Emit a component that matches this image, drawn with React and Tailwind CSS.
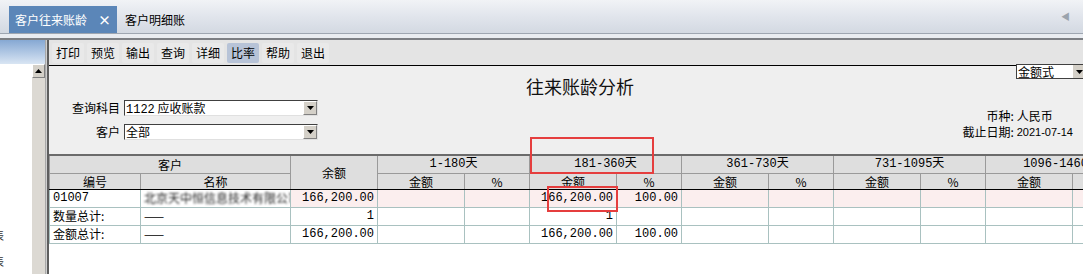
import React from "react";

const cjk = "font-['SimSun','Noto_Sans_CJK_SC',sans-serif]";
const num = "font-['Liberation_Mono','Noto_Sans_CJK_SC',monospace]";

const tools = ["打印", "预览", "输出", "查询", "详细", "比率", "帮助", "退出"];
const ranges = ["1-180天", "181-360天", "361-730天", "731-1095天", "1096-1460天"];

const Dropdown = ({ value, width }) => (
  <div
    className={`flex h-[16px] ${width} border border-t-[#404040] border-l-[#404040] border-r-[#e0e0e0] border-b-[#e0e0e0] bg-white`}
  >
    <span className="flex-1 pl-[1px] text-[12px] leading-[14px] text-black">{value}</span>
    <span className="flex w-[14px] items-center justify-center border border-t-white border-l-white border-r-[#808080] border-b-[#808080] bg-[#d4d0c8]">
      <svg width="7" height="4" viewBox="0 0 7 4">
        <path d="M0 0h7L3.5 4z" fill="#000" />
      </svg>
    </span>
  </div>
);

const hd = "border border-[#9a9a9a] bg-[#dedede] text-center font-normal text-[12px] leading-[15px] text-black p-0";
const td = "border border-[#a9c1c0] text-[12px] text-black p-0 px-[3px] h-[18px] leading-[16px]";

export default function App() {
  return (
    <div className={`relative flex h-[274px] w-[1083px] flex-col overflow-hidden bg-[#efefef] ${cjk}`}>
      {/* tab bar */}
      <div className="flex h-[33px] shrink-0 items-end bg-gradient-to-b from-[#f1f3f6] via-[#e1e5ec] to-[#d3d9e2] pl-[9px]">
        <div className="flex h-[27px] w-[108px] items-center bg-[#5b86b8] pl-[6px] text-[12px] text-white">
          <span>客户往来账龄</span>
          <span className="ml-[11px] text-[13px] font-bold">×</span>
        </div>
        <div className="flex h-[27px] items-center pl-[8px] text-[12px] text-black">客户明细账</div>
        <div className="ml-auto mr-[13px] self-center text-[9px] text-[#9aa3ad]">◀</div>
      </div>
      <div className="h-[7px] shrink-0 border-t border-t-[#9ea6b1] border-b-2 border-b-[#7c7f84] bg-[#e9ecf1]" />

      {/* body */}
      <div className="flex min-h-0 flex-1">
        {/* left panel */}
        <div className="flex w-[45px] shrink-0 flex-col bg-white">
          <div className="h-[31px] bg-gradient-to-b from-[#86a8d3] to-[#d9e5f3]" />
          <div className="flex flex-1">
            <div className="flex flex-1 flex-col overflow-hidden pt-[158px] text-[11px] leading-[26px] text-[#333]">
              <span className="-ml-[7px]">表</span>
              <span className="-ml-[7px]">表</span>
            </div>
            <div className="flex w-[13px] flex-col bg-[#dcd9d3]">
              <div className="flex h-[14px] items-center justify-center border border-t-white border-l-white border-r-[#808080] border-b-[#808080] bg-[#d4d0c8]">
                <svg width="7" height="4" viewBox="0 0 7 4">
                  <path d="M3.5 0L7 4H0z" fill="#000" />
                </svg>
              </div>
            </div>
          </div>
        </div>
        <div className="w-[4px] shrink-0 border-l border-l-[#a8a8a8] border-r-2 border-r-[#5e5e5e] bg-[#cfcfcf]" />

        {/* main */}
        <div className="flex min-w-0 flex-1 flex-col">
          <div className="flex h-[26px] shrink-0 items-center gap-[3px] border-b border-b-black bg-[#e4e4e4] pl-[3px]">
            {tools.map((t) => (
              <span
                key={t}
                className={`h-[20px] rounded-[2px] px-[4px] text-[12px] leading-[20px] text-black ${
                  t === "比率" ? "bg-[#b7c3d7]" : "bg-[#e9e9e9]"
                }`}
              >
                {t}
              </span>
            ))}
          </div>

          {/* header area */}
          <div className="grid h-[33px] shrink-0 grid-cols-[1fr_auto_1fr]">
            <div />
            <div className="ml-[28px] mt-[9px] text-[18px] leading-[22px] text-[#111]">往来账龄分析</div>
            <div className="flex justify-end">
              <div className="-mt-[2px] -mr-[4px] flex h-[15px] w-[71px] border border-[#404040] bg-white">
                <span className="flex-1 pl-[1px] text-[12px] leading-[13px]">金额式</span>
                <span className="flex w-[13px] items-center justify-center bg-[#d4d0c8]">
                  <svg width="7" height="4" viewBox="0 0 7 4">
                    <path d="M0 0h7L3.5 4z" fill="#000" />
                  </svg>
                </span>
              </div>
            </div>
          </div>

          {/* query form */}
          <div className="flex shrink-0 items-end justify-between pr-[10px]">
            <div className="flex flex-col gap-[6px]">
              <div className="flex items-center gap-[4px]">
                <span className="w-[71px] text-right text-[12px]">查询科目</span>
                <Dropdown value={<><span className={num}>1122</span> 应收账款</>} width="w-[194px]" />
              </div>
              <div className="flex items-center gap-[4px]">
                <span className="w-[71px] text-right text-[12px]">客户</span>
                <Dropdown value="全部" width="w-[194px]" />
              </div>
            </div>
            <div className="mb-[1px] grid grid-cols-[auto_auto] text-[12px] leading-[16px]">
              <span className="text-right">币种:</span>
              <span className="pl-[3px]">人民币</span>
              <span className="text-right">截止日期:</span>
              <span className="pl-[3px] font-['Liberation_Sans',sans-serif] text-[11px]">2021-07-14</span>
            </div>
          </div>

          {/* table */}
          <div className="relative mt-[13px] min-w-0 flex-1 overflow-hidden bg-white">
            <table className="w-[1088px] table-fixed border-collapse border-t-2 border-t-[#6b6b6b]">
              <colgroup>
                <col className="w-[91px]" />
                <col className="w-[150px]" />
                <col className="w-[87px]" />
                {ranges.map((r) => (
                  <React.Fragment key={r}>
                    <col className="w-[87px]" />
                    <col className="w-[65px]" />
                  </React.Fragment>
                ))}
              </colgroup>
              <thead>
                <tr className="h-[18px]">
                  <th colSpan={2} className={hd}>客户</th>
                  <th rowSpan={2} className={`${hd} border-b-black`}>余额</th>
                  {ranges.map((r) => (
                    <th key={r} colSpan={2} className={`${hd} ${num} text-[11px] whitespace-nowrap`}>
                      {r}
                    </th>
                  ))}
                </tr>
                <tr className="h-[16px] border-b border-b-black">
                  <th className={`${hd} border-b-black`}>编号</th>
                  <th className={`${hd} border-b-black`}>名称</th>
                  {ranges.map((r) => (
                    <React.Fragment key={r}>
                      <th className={`${hd} border-b-black`}>金额</th>
                      <th className={`${hd} border-b-black`}>%</th>
                    </React.Fragment>
                  ))}
                </tr>
              </thead>
              <tbody>
                <tr>
                  <td className={`${td} ${num} text-[11px]`}>01007</td>
                  <td className={`${td} overflow-hidden whitespace-nowrap`}>
                    <span className="inline-block blur-[1px] text-[#222]">北京天中恒信息技术有限公司</span>
                  </td>
                  <td className={`${td} ${num} bg-[#fbeeee] text-right text-[11px]`}>166,200.00</td>
                  <td className={`${td} bg-[#fbeeee]`} />
                  <td className={`${td} bg-[#fbeeee]`} />
                  <td className={`${td} ${num} bg-[#fbeeee] text-right text-[11px]`}>166,200.00</td>
                  <td className={`${td} ${num} bg-[#fbeeee] text-right text-[11px]`}>100.00</td>
                  {[0, 1, 2, 3, 4, 5].map((i) => (
                    <td key={i} className={`${td} bg-[#fbeeee]`} />
                  ))}
                </tr>
                <tr>
                  <td className={td}>数量总计:</td>
                  <td className={td}>——</td>
                  <td className={`${td} ${num} text-right text-[11px]`}>1</td>
                  <td className={td} />
                  <td className={td} />
                  <td className={`${td} ${num} text-right text-[11px]`}>1</td>
                  {[0, 1, 2, 3, 4, 5, 6].map((i) => (
                    <td key={i} className={td} />
                  ))}
                </tr>
                <tr>
                  <td className={td}>金额总计:</td>
                  <td className={td}>——</td>
                  <td className={`${td} ${num} text-right text-[11px]`}>166,200.00</td>
                  <td className={td} />
                  <td className={td} />
                  <td className={`${td} ${num} text-right text-[11px]`}>166,200.00</td>
                  <td className={`${td} ${num} text-right text-[11px]`}>100.00</td>
                  {[0, 1, 2, 3, 4, 5].map((i) => (
                    <td key={i} className={td} />
                  ))}
                </tr>
              </tbody>
            </table>
          </div>
        </div>
      </div>

      {/* annotation boxes */}
      <div className="pointer-events-none absolute left-[530px] top-[137px] h-[37px] w-[124px] border-2 border-[#e53e3e]" />
      <div className="pointer-events-none absolute left-[547px] top-[186px] h-[26px] w-[71px] border-2 border-[#e53e3e]" />
    </div>
  );
}
